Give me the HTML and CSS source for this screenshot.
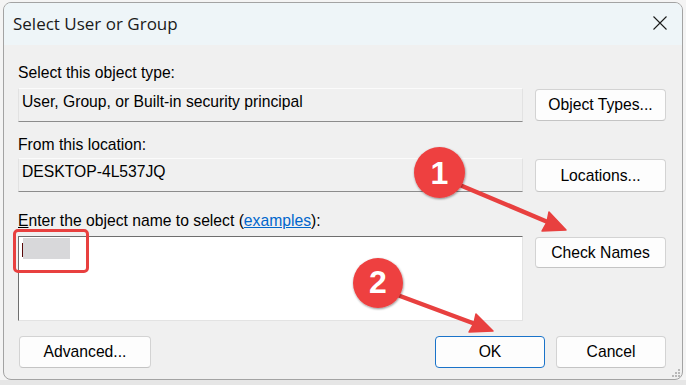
FILE: index.html
```html
<!DOCTYPE html>
<html>
<head>
<meta charset="utf-8">
<link rel="stylesheet" href="styles.css">
</head>
<body>
<div class="page">
  <div class="window">
    <div class="titlebar">
      <span class="title">Select User or Group</span>
      <svg class="close" width="14" height="14" viewBox="0 0 14 14"><path d="M0.5 0.5 L13.5 13.5 M13.5 0.5 L0.5 13.5" stroke="#1b1b1b" stroke-width="1.1" fill="none"/></svg>
    </div>
    <div class="content">
      <div class="grid">
        <div class="label l1">Select this object type:</div>
        <div class="field">User, Group, or Built-in security principal</div>
        <div class="btn b1">Object Types...</div>

        <div class="label l2">From this location:</div>
        <div class="field">DESKTOP-4L537JQ</div>
        <div class="btn b2">Locations...</div>

        <div class="label l3"><u>E</u>nter the object name to select (<a class="link">examples</a>):</div>
        <div class="textarea">
          <span class="caret"></span><span class="blur"></span>
          <span class="hilite"></span>
        </div>
        <div class="btn b3">Check Names</div>
      </div>
      <div class="footer">
        <div class="btn adv">Advanced...</div>
        <div class="spacer"></div>
        <div class="btn ok">OK</div>
        <div class="btn cancel">Cancel</div>
      </div>
    </div>
    <svg class="grip" width="8" height="8" viewBox="0 0 8 8"><g fill="#b8b8b8"><rect x="6" y="0" width="2" height="2"/><rect x="3" y="3" width="2" height="2"/><rect x="6" y="3" width="2" height="2"/><rect x="0" y="6" width="2" height="2"/><rect x="3" y="6" width="2" height="2"/><rect x="6" y="6" width="2" height="2"/></g></svg>
  </div>
  <div class="behind"></div>
  <svg class="annot" width="686" height="385" viewBox="0 0 686 385">
    <defs>
      <filter id="sh" x="-30%" y="-30%" width="160%" height="160%">
        <feDropShadow dx="0.5" dy="1" stdDeviation="1" flood-color="#000" flood-opacity="0.45"/>
      </filter>
    </defs>
    <g fill="#e8403f" stroke="#e8403f" stroke-linejoin="round">
      <line x1="455" y1="183" x2="550" y2="223" stroke-width="4.5"/>
      <polygon points="566,230 542,231 547,222 549,212" stroke-width="1.5"/>
      <line x1="392" y1="293" x2="478" y2="325" stroke-width="4.5"/>
      <polygon points="493,331 469,332 474,323 476,314" stroke-width="1.5"/>
    </g>
    <g filter="url(#sh)">
      <circle cx="439.5" cy="172.5" r="25.5" fill="#ee4040"/>
      <circle cx="378" cy="283" r="25" fill="#ee4040"/>
    </g>
    <text x="439.5" y="184" class="num">1</text>
    <text x="378" y="292.5" class="num">2</text>
  </svg>
</div>
</body>
</html>
```

FILE: styles.css
```css
html, body {
  margin: 0;
  padding: 0;
}
body {
  background: #f4f4f4;
  width: 686px;
  height: 385px;
  overflow: hidden;
}
.page {
  position: relative;
  width: 686px;
  height: 385px;
  display: flex;
  flex-direction: column;
  align-items: flex-start;
}
.window {
  position: relative;
  margin: 2px 0 0 3px;
  width: 680px;
  height: 378px;
  box-sizing: border-box;
  border: 1px solid #a3a3a3;
  border-radius: 8px;
  background: #f0f0f0;
  overflow: hidden;
  font-family: "Liberation Sans", Arial, sans-serif;
  font-size: 15.7px;
  color: #000;
  z-index: 1;
}
.titlebar {
  height: 42px;
  background: #eef5f8;
  display: flex;
  align-items: center;
  justify-content: space-between;
  padding: 0 15px 0 9px;
}
.title {
  font-family: "Open Sans", "Noto Sans", sans-serif;
  font-size: 17px;
  color: #1a1a1a;
  margin-top: -2px;
}
.close {
  display: block;
  margin-top: -2px;
}
.content {
  padding: 19px 16px 0 14px;
}
.grid {
  display: grid;
  grid-template-columns: 505px 131px;
  column-gap: 12px;
  align-items: start;
}
.label {
  grid-column: 1 / 3;
  line-height: 18px;
  height: 18px;
}
.l1 { margin-bottom: 6px; }
.l2 { margin-top: 14px; margin-bottom: 4px; }
.l3 { margin-top: 20px; margin-bottom: 6px; }
.link {
  color: #0066cc;
  text-decoration: underline;
}
.field {
  height: 34px;
  box-sizing: border-box;
  border: 1px solid #e2e2e2;
  border-top-color: #fbfbfb;
  border-bottom-color: #8c8c8c;
  padding: 4px 0 0 3px;
  line-height: 18px;
  background: #f0f0f0;
}
.btn {
  box-sizing: border-box;
  height: 32px;
  background: #fdfdfd;
  border: 1px solid #d3d3d3;
  border-bottom-color: #c4c4c4;
  border-radius: 4px;
  display: flex;
  align-items: center;
  justify-content: center;
  line-height: 18px;
}
.b1 { margin-top: 1px; }
.b2 { margin-top: 1px; height: 33px; }
.b3 { margin-top: 1px; height: 31px; }
.textarea {
  position: relative;
  height: 85px;
  box-sizing: border-box;
  background: #fff;
  border: 1px solid #e3e3e3;
  border-top-color: #6e6e6e;
  border-left-color: #6e6e6e;
}
.caret {
  position: absolute;
  left: 3px;
  top: 6px;
  width: 2px;
  height: 14px;
  background: #5a0a0a;
}
.blur {
  position: absolute;
  left: 4px;
  top: 1px;
  width: 47px;
  height: 21px;
  background: #d8d8da;
}
.hilite {
  position: absolute;
  left: -6px;
  top: -8px;
  width: 76px;
  height: 44px;
  box-sizing: border-box;
  border: 3.5px solid #e8403f;
  border-radius: 5px;
}
.footer {
  display: flex;
  margin-top: 15px;
  gap: 11px;
}
.adv { width: 132px; margin-left: 1px; }
.spacer { flex: 1; }
.ok {
  width: 110px;
  border-color: #1a73c9;
}
.cancel { width: 110px; }
.grip {
  position: absolute;
  right: 2px;
  bottom: 2px;
}
.behind {
  width: 686px;
  height: 5px;
  background: #e6e6e6;
}
.annot {
  position: absolute;
  left: 0;
  top: 0;
  z-index: 2;
}
.num {
  font-family: "Liberation Sans", Arial, sans-serif;
  font-weight: bold;
  font-size: 32px;
  fill: #fff;
  text-anchor: middle;
}
```
